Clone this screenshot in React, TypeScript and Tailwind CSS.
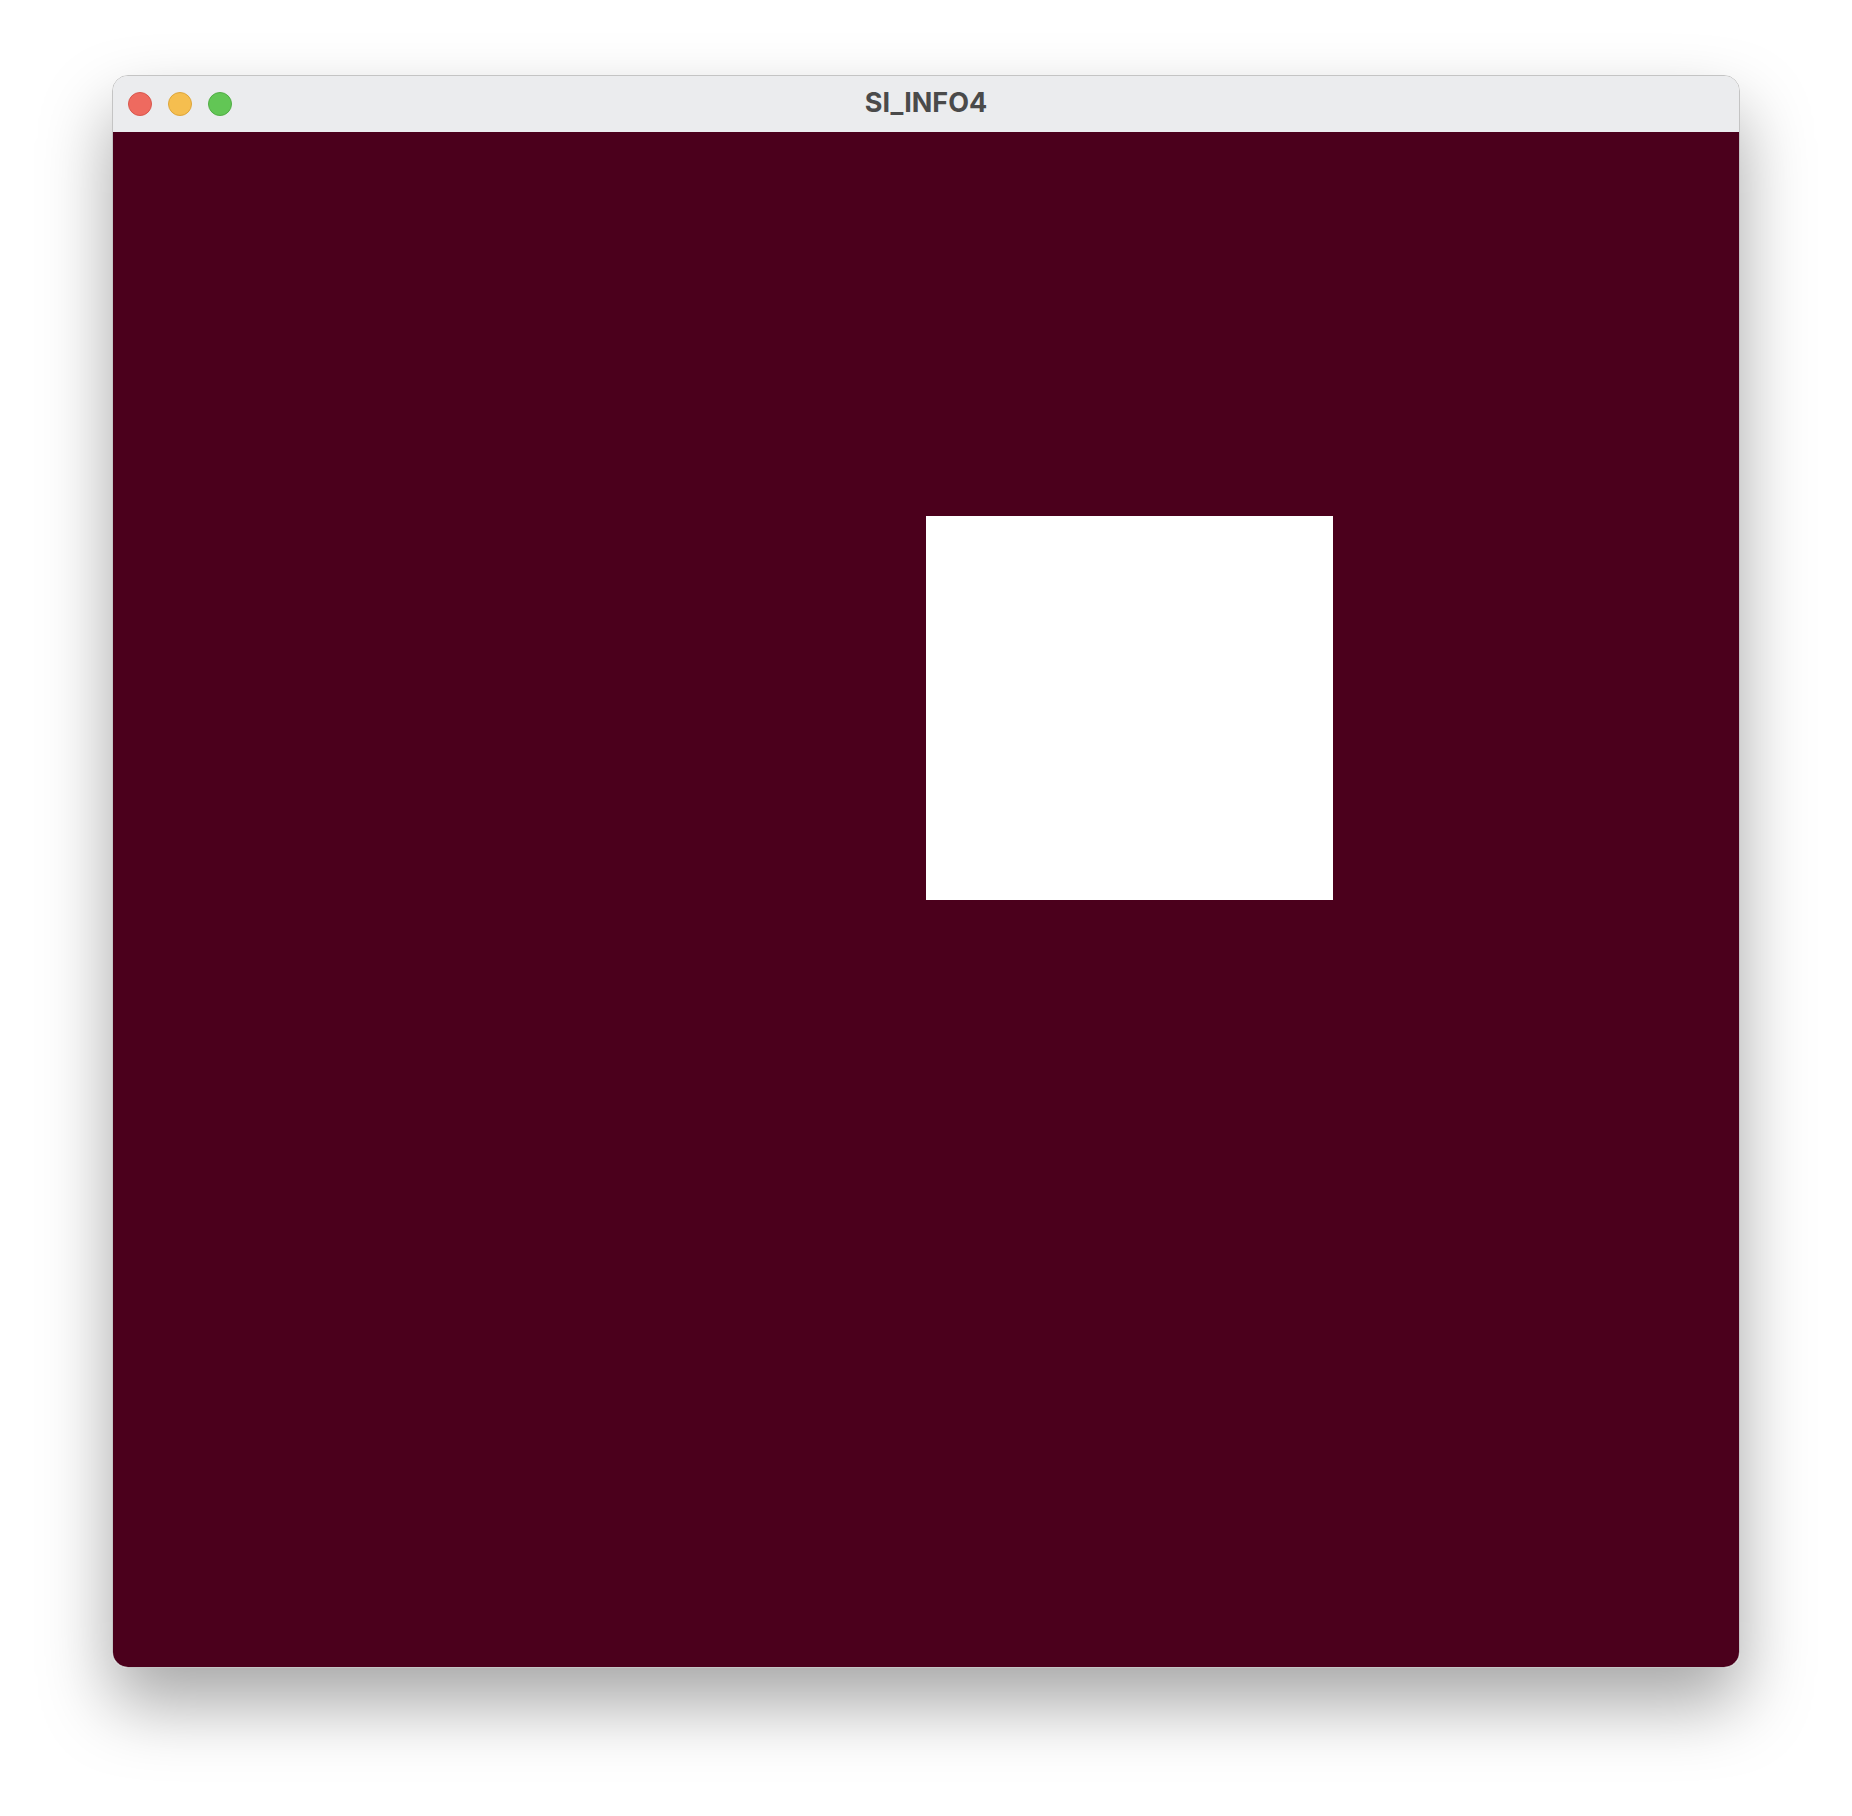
import React from 'react';

// macOS-style window with a single white rectangle on a maroon canvas
const TrafficLights: React.FC = () => (
  <div className="flex items-center gap-4">
    <span className="w-6 h-6 rounded-full bg-[#ee6a5f] border border-[#d9574d]" />
    <span className="w-6 h-6 rounded-full bg-[#f5be4f] border border-[#dea63a]" />
    <span className="w-6 h-6 rounded-full bg-[#62c655] border border-[#51ad45]" />
  </div>
);

const App: React.FC = () => {
  return (
    <div className="w-[1852px] h-[1816px] bg-white pt-[75px] pl-[112px]">
      <div className="w-[1628px] h-[1593px] rounded-[16px] overflow-hidden border border-[#c4c4c4] shadow-[0_36px_70px_rgba(0,0,0,0.35)] flex flex-col">
        <div className="relative h-[56px] shrink-0 bg-[#ebecee] flex items-center pl-[15px]">
          <TrafficLights />
          <div
            className="absolute inset-0 flex items-center justify-center pb-[2px] text-[27px] font-bold text-[#4a4a4a]"
            style={{ fontFamily: '"Inter", "Liberation Sans", sans-serif' }}
          >
            SI_INFO4
          </div>
        </div>
        <div className="flex-1 bg-[#4b001c] grid grid-cols-4 grid-rows-4">
          <div className="col-start-3 row-start-2 bg-white" />
        </div>
      </div>
    </div>
  );
};

export default App;
